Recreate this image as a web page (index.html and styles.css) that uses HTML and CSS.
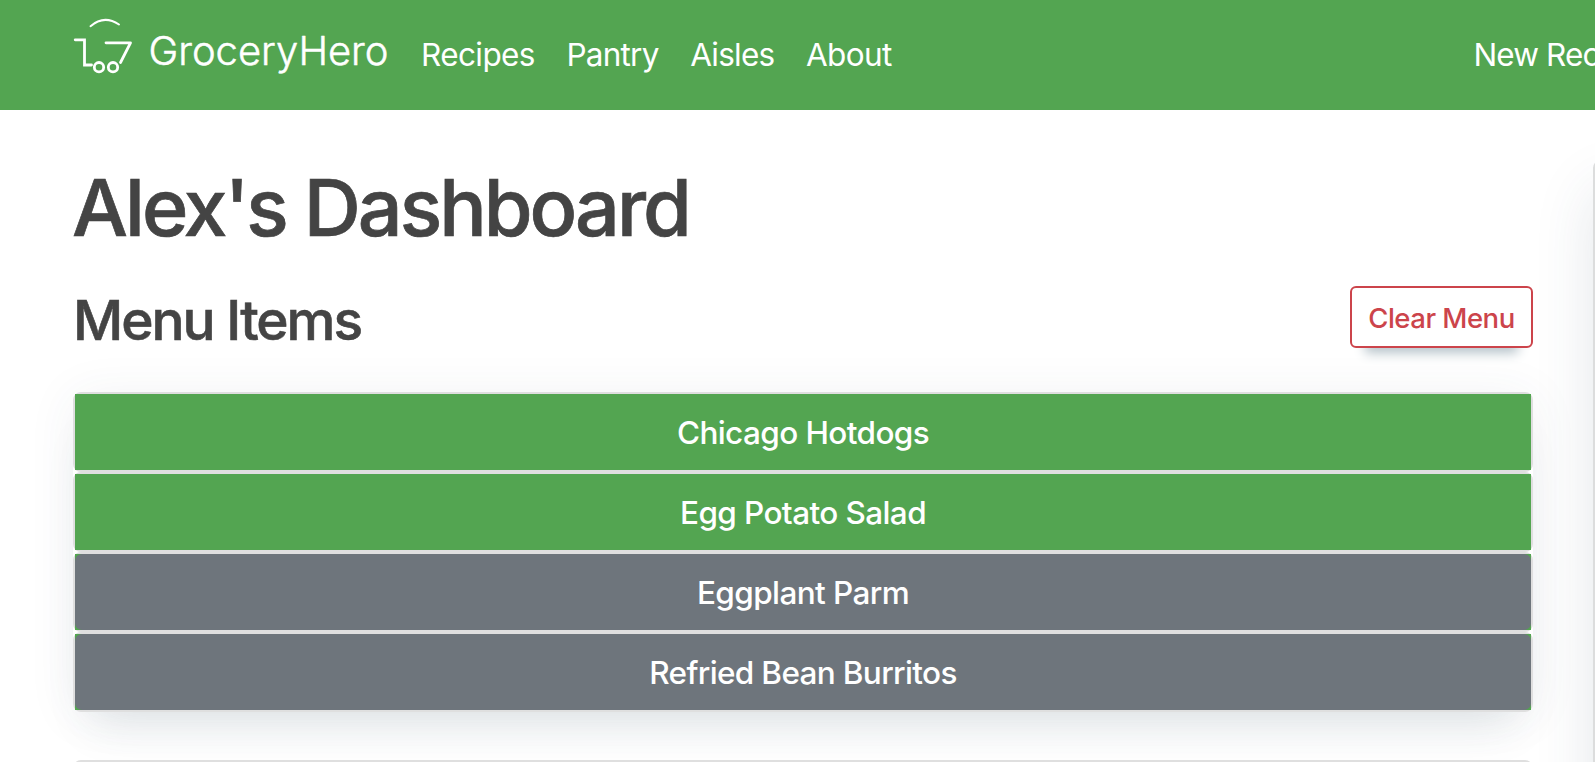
FILE: index.html
```html
<!DOCTYPE html>
<html lang="en">
<head>
<meta charset="utf-8">
<title>GroceryHero</title>
<link rel="stylesheet" href="styles.css">
</head>
<body>
<header class="navbar">
  <a class="brand" aria-label="GroceryHero">
    <svg class="brand-logo" width="320" height="70" viewBox="0 0 320 70">
      <g fill="none" stroke="#fff" stroke-width="2.8" stroke-linecap="round" stroke-linejoin="miter">
        <path stroke-width="2" d="M18.500 16.200Q32 4.500 47 14.500"/>
        <path d="M3.200 29.800H12.500V55H19.500"/>
        <path stroke-linejoin="round" d="M34 32.800H58.500L48.500 52.500"/>
        <circle cx="27" cy="57.200" r="4.700"/>
        <circle cx="41" cy="57.200" r="4.700"/>
      </g>
      <text class="brand-name" x="76.500" y="55" textLength="240" lengthAdjust="spacingAndGlyphs">GroceryHero</text>
    </svg>
  </a>
  <nav class="nav-main">
    <a class="n-recipes">Recipes</a>
    <a class="n-pantry">Pantry</a>
    <a class="n-aisles">Aisles</a>
    <a class="n-about">About</a>
  </nav>
  <nav class="nav-end"><a>New Recipe</a></nav>
</header>
<main class="page">
  <section class="content">
    <h1 class="title">Alex's Dashboard</h1>
    <div class="menu-head">
      <h2 class="subtitle">Menu Items</h2>
      <button class="clear">Clear Menu</button>
    </div>
    <div class="menu">
      <div class="item"><button class="item-button">Chicago Hotdogs</button></div>
      <div class="item"><button class="item-button">Egg Potato Salad</button></div>
      <div class="item"><button class="item-button muted">Eggplant Parm</button></div>
      <div class="item"><button class="item-button muted burritos">Refried Bean Burritos</button></div>
    </div>
    <div class="next-card"></div>
  </section>
  <aside class="side-card"></aside>
</main>
</body>
</html>
```
FILE: styles.css
```css
* { box-sizing: border-box; }
html, body { height: 100%; }
body {
  margin: 0;
  overflow: hidden;
  background: #fff;
  color: #444;
  font-family: Inter, "Liberation Sans", sans-serif;
}
.navbar {
  display: flex;
  height: 110px;
  padding-left: 72px;
  background: #53a551;
  color: #fff;
  white-space: nowrap;
}
.brand { width: 349px; height: 110px; flex: none; padding-top: 10px; }
.brand-logo { display: block; }
.brand-name {
  fill: #fff;
  stroke: #fff;
  stroke-width: 0.5px;
  stroke-linejoin: round;
  font-family: Inter, sans-serif;
  font-weight: 300;
  font-size: 39.5px;
}
.nav-main { display: flex; gap: 31.5px; }
.nav-main a, .nav-end a {
  font-size: 31.5px;
  line-height: 109px;
  letter-spacing: -0.6px;
}
.nav-main .n-pantry, .nav-main .n-aisles { letter-spacing: -0.75px; }
.nav-end { margin-left: auto; width: 121.5px; overflow: hidden; }
.nav-end a { letter-spacing: -0.9px; }
.page { display: flex; height: 652px; overflow: hidden; }
.content { width: 1460px; margin-left: 73px; flex: none; }
.title {
  margin: 50px 0 0 -1px;
  font-size: 79px;
  line-height: 95px;
  font-weight: 500;
  letter-spacing: -3px;
  -webkit-text-stroke: 0.7px #444;
}
.menu-head {
  display: flex;
  justify-content: space-between;
  margin-top: 31px;
  height: 106px;
}
.subtitle {
  margin: 0;
  font-size: 55px;
  line-height: 69px;
  font-weight: 500;
  letter-spacing: -2px;
  -webkit-text-stroke: 0.6px #444;
}
.clear {
  width: 183px;
  height: 62px;
  padding: 2px 0 0;
  border: 2px solid #cc444b;
  border-radius: 6px;
  background: #fff;
  color: #cc444b;
  font: 450 27.500px Inter, sans-serif;
  letter-spacing: -0.5px;
  box-shadow: 0 20px 12px -15px #b5c2c9;
}
.menu {
  height: 320px;
  border-radius: 8px;
  box-shadow: 0 4px 50px rgba(50, 70, 93, .07), 0 30px 44px -20px rgba(50, 75, 93, .13);
}
.item {
  height: 80px;
  border: 2px solid #dfdfdf;
  border-radius: 8px;
  background: #fff;
}
.item-button {
  display: block;
  width: 100%;
  height: 76px;
  padding: 0;
  border: 0;
  background: #53a551;
  color: #fff;
  font: 470 31.500px Inter, sans-serif;
  letter-spacing: -0.6px;
}
/* the green button stays visible at the rounded corners of the grey fill */
.muted {
  position: relative;
  z-index: 0;
}
.muted::before {
  content: "";
  position: absolute;
  z-index: -1;
  inset: 0;
  border-radius: 7px;
  background: #6e757c;
}
.burritos { letter-spacing: -0.65px; }
.next-card {
  height: 200px;
  margin-top: 48px;
  border: 2px solid #dfdfdf;
  border-radius: 8px;
}
.side-card {
  width: 600px;
  height: 900px;
  flex: none;
  margin: 50px 0 0 60px;
  border: 2px solid #dcdddd;
  border-radius: 8px;
  background: #fff;
  box-shadow: 0 30px 60px rgba(50, 70, 93, .13);
}
```
